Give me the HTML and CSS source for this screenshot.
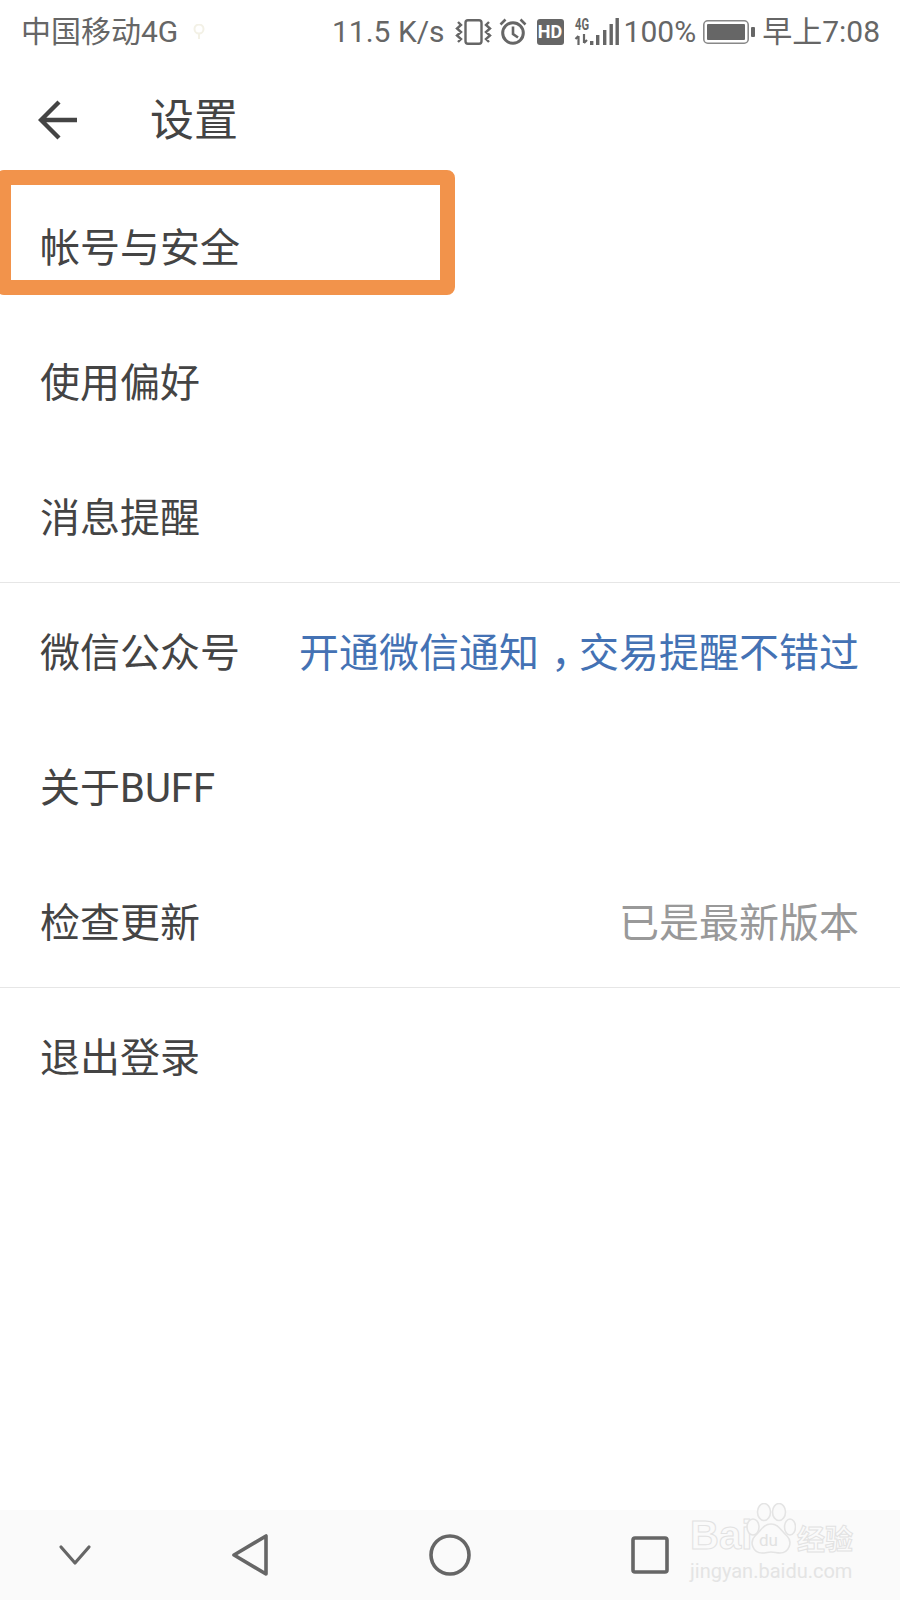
FILE: index.html
```html
<!DOCTYPE html>
<html lang="zh-CN">
<head>
    <meta charset="UTF-8">
    <meta name="viewport" content="width=device-width, initial-scale=1.0">
    <title>设置</title>
    <link rel="stylesheet" href="styles.css">
</head>
<body>

    <div class="phone">
        <div class="statusbar">
            <div class="status-left">
                <span class="carrier">中国移动4G</span>
                <svg class="ic-wifi" width="14" height="16" viewBox="0 0 14 16">
                    <circle cx="7" cy="5" r="4.5" fill="none" stroke="#f3f1e6" stroke-width="2"/>
                    <path d="M7 10v5" stroke="#f3f1e6" stroke-width="2"/>
                </svg>
            </div>
            <div class="status-right">
                <span class="speed">11.5 K/s</span>
                <svg class="ic-vibrate" width="37" height="26" viewBox="0 0 37 26">
                    <rect x="10.5" y="1.2" width="16" height="23.6" rx="2.5" fill="none" stroke="#666" stroke-width="2.4"/>
                    <path d="M3 3l3 3-4 3.5 4 3.5-4 3.5 4 3.5-3 3M34 3l-3 3 4 3.5-4 3.5 4 3.5-4 3.5 3 3" fill="none" stroke="#666" stroke-width="2.4"/>
                </svg>
                <svg class="ic-alarm" width="28" height="27" viewBox="0 0 28 27">
                    <circle cx="14" cy="15" r="10.3" fill="none" stroke="#666" stroke-width="3"/>
                    <path d="M14 8.5v7.5l5 3.5M1.5 6.5l5-5M26.5 6.5l-5-5" fill="none" stroke="#666" stroke-width="2.6"/>
                </svg>
                <span class="hd">HD</span>
                <svg class="ic-signal" width="44" height="27" viewBox="0 0 44 27">
                    <text x="0" y="12" class="net-label" textLength="14" lengthAdjust="spacingAndGlyphs">4G</text>
                    <path d="M3.5 27v-9M0.5 21l3-3M9 16v9M12 22l-3 3" fill="none" stroke="#666" stroke-width="2.2"/>
                    <rect x="15" y="23" width="3.4" height="4" fill="#666"/>
                    <rect x="21" y="17" width="3.4" height="10" fill="#666"/>
                    <rect x="28" y="12" width="3.4" height="15" fill="#666"/>
                    <rect x="34.5" y="6" width="3.4" height="21" fill="#666"/>
                    <rect x="40.5" y="0" width="3.4" height="27" fill="#666"/>
                </svg>
                <span class="percent">100%</span>
                <svg class="ic-battery" width="52" height="24" viewBox="0 0 52 24">
                    <rect x="0.8" y="0.8" width="44.4" height="22.4" rx="4" fill="none" stroke="#888" stroke-width="1.6"/>
                    <rect x="4" y="4" width="38" height="16" rx="1" fill="#666"/>
                    <rect x="48" y="7" width="4" height="10" rx="1" fill="#666"/>
                </svg>
                <span class="clock">早上7:08</span>
            </div>
        </div>

        <div class="titlebar">
            <svg class="back" width="40" height="40" viewBox="0 0 40 40">
                <path d="M39 20H3M21 2L3 20l18 18" fill="none" stroke="#444" stroke-width="4.4"/>
            </svg>
            <h1>设置</h1>
        </div>

        <div class="group first">
            <div class="row highlighted"><span>帐号与安全</span></div>
            <div class="row"><span>使用偏好</span></div>
            <div class="row"><span>消息提醒</span></div>
        </div>
        <div class="group">
            <div class="row"><span>微信公众号</span><span class="hint link">开通微信通知<span class="comma">，</span>交易提醒不错过</span></div>
            <div class="row"><span>关于BUFF</span></div>
            <div class="row"><span>检查更新</span><span class="hint">已是最新版本</span></div>
        </div>
        <div class="group last">
            <div class="row"><span>退出登录</span></div>
        </div>

        <div class="navbar">
            <svg width="36" height="24" viewBox="0 0 36 24" class="nav-down">
                <path d="M4 4l14 16L32 4" fill="none" stroke="#666" stroke-width="3.2" stroke-linecap="round" stroke-linejoin="round"/>
            </svg>
            <svg width="38" height="44" viewBox="0 0 38 44" class="nav-back">
                <path d="M35 3v38L3 22z" fill="none" stroke="#666" stroke-width="3.6" stroke-linejoin="round"/>
            </svg>
            <svg width="42" height="42" viewBox="0 0 42 42" class="nav-home">
                <circle cx="21" cy="21" r="19" fill="none" stroke="#666" stroke-width="3.6"/>
            </svg>
            <svg width="38" height="38" viewBox="0 0 38 38" class="nav-recent">
                <rect x="2" y="2" width="34" height="34" rx="2" fill="none" stroke="#666" stroke-width="3.6"/>
            </svg>
        </div>

        <div class="watermark">
            <div class="wm-logo">
                <span class="wm-bai">Bai</span>
                <svg width="50" height="52" viewBox="0 0 50 52">
                    <g fill="#fafafa" stroke="#e4e4e4" stroke-width="1.6">
                        <ellipse cx="7" cy="24" rx="6" ry="8"/>
                        <ellipse cx="18" cy="9" rx="6.5" ry="8.5"/>
                        <ellipse cx="33" cy="9" rx="6.5" ry="8.5"/>
                        <ellipse cx="44" cy="24" rx="5.5" ry="8"/>
                        <path d="M25 21c-8 0-10 7-16 12-6 6-2 17 7 17 4 0 6-1 9-1s6 1 9 1c9 0 13-11 7-17-6-5-8-12-16-12z"/>
                    </g>
                    <text x="13" y="43" class="wm-du">du</text>
                </svg>
                <span class="wm-cn">经验</span>
            </div>
            <div class="wm-url">jingyan.baidu.com</div>
        </div>
    </div>

</body>
</html>
```

FILE: styles.css
```css
body {
    margin: 0;
    padding: 0;
    background-color: #fff;
    font-family: Roboto, "Noto Sans CJK SC", sans-serif;
}
.phone {
    position: relative;
    width: 900px;
    height: 1600px;
    display: flex;
    flex-direction: column;
    overflow: hidden;
    background: #fff;
}
.statusbar {
    height: 63px;
    display: flex;
    align-items: center;
    justify-content: space-between;
    padding: 0 20px 0 21px;
    color: #666;
    font-size: 30px;
    line-height: 1;
}
.status-left {
    display: flex;
    align-items: center;
    gap: 14px;
}
.status-right {
    display: flex;
    align-items: center;
    gap: 10px;
}
.hd {
    width: 27px;
    height: 26px;
    border-radius: 3px;
    background: #666;
    color: #fff;
    font-size: 18px;
    font-weight: bold;
    line-height: 26px;
    text-align: center;
}
.ic-alarm {
    margin-left: -3px;
}
.ic-signal {
    margin-left: 1px;
    overflow: visible;
}
.net-label {
    font-size: 16px;
    font-weight: bold;
    fill: #666;
}
.percent {
    margin-left: -5px;
}
.ic-battery {
    margin-left: -3px;
}
.clock {
    margin-left: -3px;
}
.titlebar {
    height: 107px;
    display: flex;
    align-items: center;
    padding-left: 38px;
}
.back {
    margin-top: 6px;
}
.titlebar h1 {
    margin: 0 0 0 72px;
    font-size: 44px;
    font-weight: normal;
    color: #444;
}
.group {
    border-bottom: 1px solid #e6e6e6;
    margin-bottom: -1px;
}
.group.first {
    margin-top: 7px;
}
.group.last {
    border-bottom: none;
}
.row {
    height: 135px;
    display: flex;
    align-items: center;
    justify-content: space-between;
    padding: 0 41px 0 40px;
    font-size: 40px;
    color: #444;
}
.hint {
    color: #999;
}
.hint.link {
    color: #4472b4;
}
.comma {
    font-feature-settings: "halt";
    padding: 0 0.2em 0 0.3em;
}
.highlighted {
    position: relative;
}
.highlighted::after {
    content: "";
    position: absolute;
    left: -4px;
    top: -7px;
    box-sizing: border-box;
    width: 459px;
    height: 125px;
    border: 15px solid #f2934b;
    border-radius: 8px;
}
.navbar {
    position: absolute;
    left: 0;
    right: 0;
    bottom: 0;
    height: 90px;
    background: #fafafa;
    display: grid;
    grid-template-columns: 150px 200px 200px 200px;
    justify-items: center;
    align-items: center;
}
.watermark {
    position: absolute;
    left: 690px;
    top: 1503px;
    width: 170px;
}
.wm-logo {
    display: flex;
    align-items: flex-end;
    font-weight: bold;
    line-height: 1;
    white-space: nowrap;
}
.wm-bai,
.wm-cn {
    color: #fafafa;
    -webkit-text-stroke: 1px #e2e2e2;
}
.wm-bai {
    font-family: "Liberation Sans", sans-serif;
    font-size: 40px;
    width: 56px;
}
.wm-cn {
    font-size: 28px;
    margin-left: 1px;
}
.wm-du {
    font-size: 17px;
    font-weight: normal;
    fill: #e2e2e2;
}
.wm-url {
    margin-top: 6px;
    font-size: 20px;
    line-height: 1;
    color: #e4e4e4;
    white-space: nowrap;
}
```
